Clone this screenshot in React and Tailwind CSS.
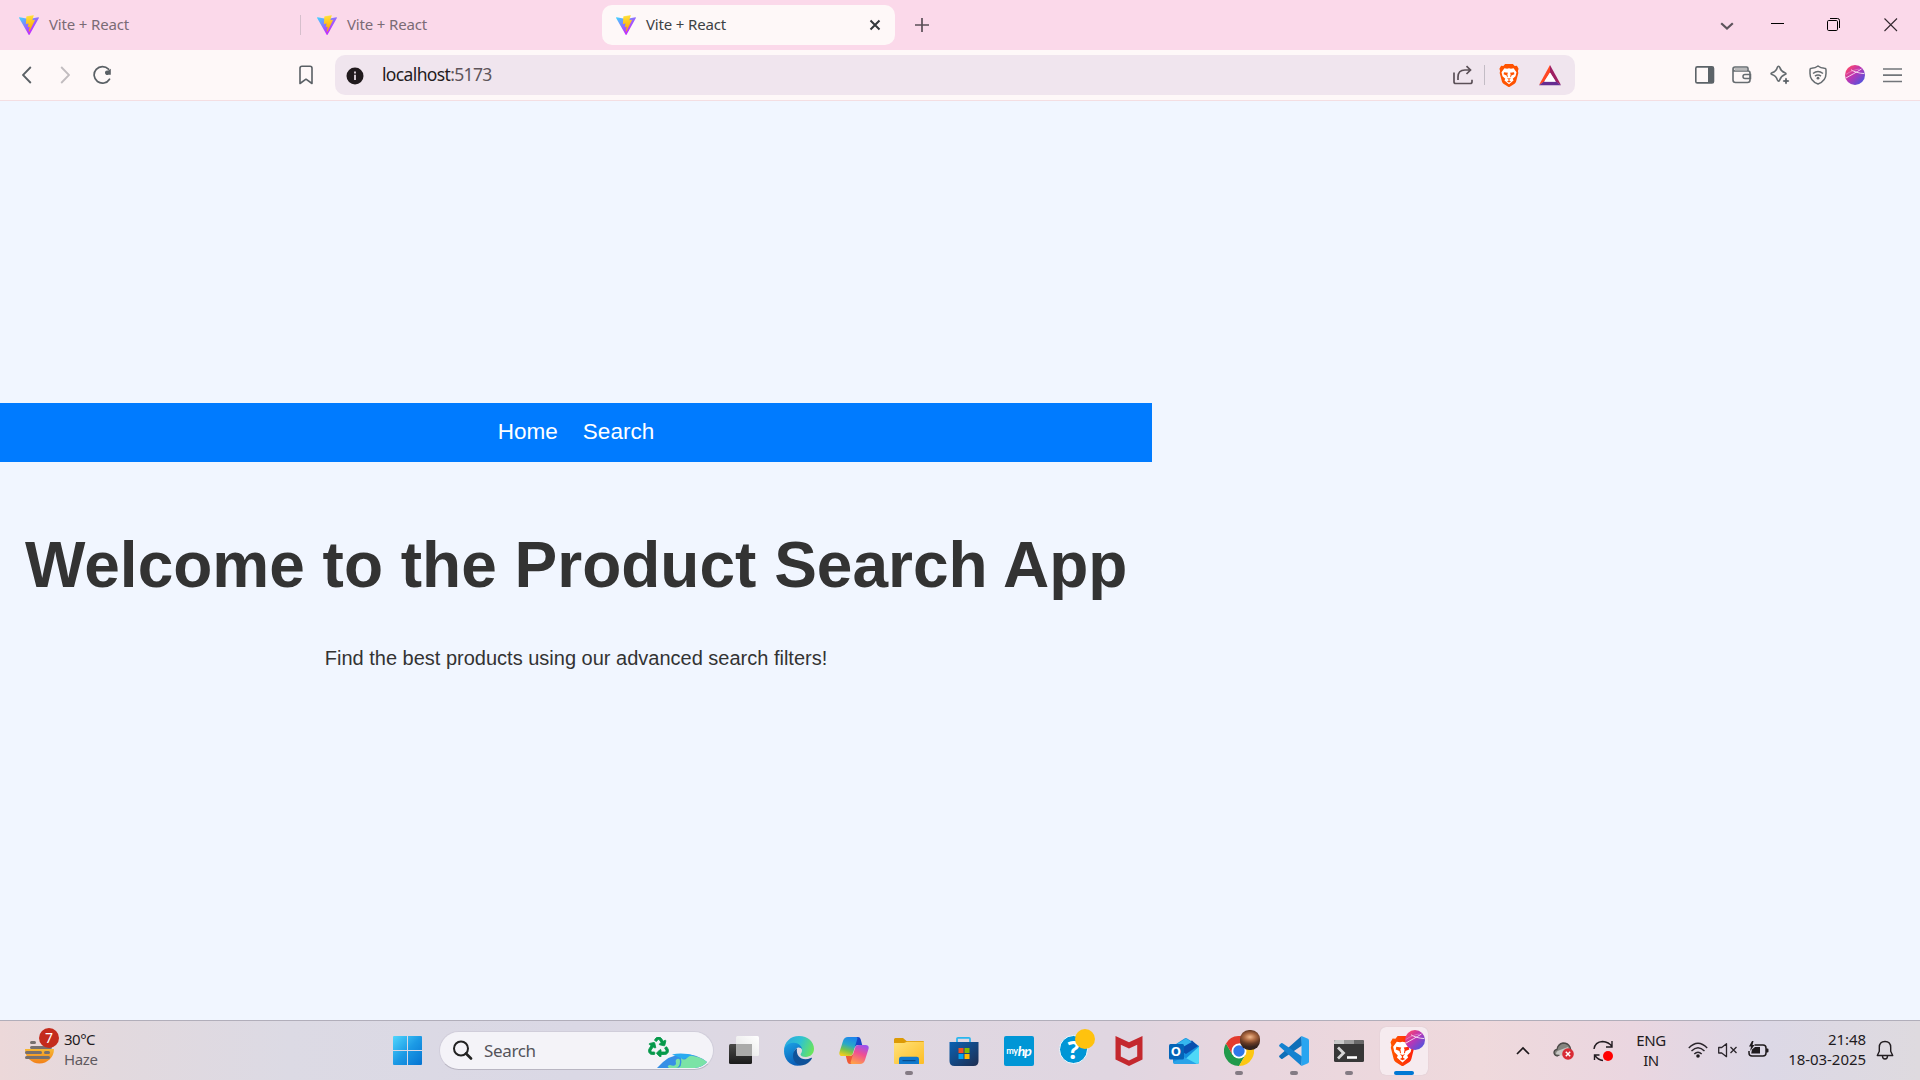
import React from "react";
import { FaRecycle } from "react-icons/fa";

const ui = "font-['Noto_Sans','Open_Sans',sans-serif]";

function ViteLogo({ id }) {
  return (
    <svg viewBox="0 0 256 257" className="h-5 w-5 shrink-0">
      <defs>
        <linearGradient id={id + "a"} x1="-.828%" x2="57.636%" y1="7.652%" y2="78.411%">
          <stop offset="0%" stopColor="#41D1FF" />
          <stop offset="100%" stopColor="#BD34FE" />
        </linearGradient>
        <linearGradient id={id + "b"} x1="43.376%" x2="50.316%" y1="2.242%" y2="89.03%">
          <stop offset="0%" stopColor="#FFEA83" />
          <stop offset="8.333%" stopColor="#FFDD35" />
          <stop offset="100%" stopColor="#FFA800" />
        </linearGradient>
      </defs>
      <path fill={`url(#${id}a)`} d="M255.153 37.938L134.897 252.976c-2.483 4.44-8.862 4.466-11.382.048L.875 37.958c-2.746-4.814 1.371-10.646 6.827-9.67l120.385 21.517a6.537 6.537 0 0 0 2.322-.004l117.867-21.483c5.438-.991 9.574 4.796 6.877 9.62Z" />
      <path fill={`url(#${id}b)`} d="M185.432.063L96.44 17.501a3.268 3.268 0 0 0-2.634 3.014l-5.474 92.456a3.268 3.268 0 0 0 3.997 3.378l24.777-5.718c2.318-.535 4.413 1.507 3.936 3.838l-7.361 36.047c-.495 2.426 1.782 4.5 4.151 3.78l15.304-4.649c2.372-.72 4.652 1.36 4.15 3.788l-11.698 56.621c-.732 3.542 3.979 5.473 5.943 2.437l1.313-2.028l72.516-144.72c1.215-2.423-.88-5.186-3.54-4.672l-25.505 4.922c-2.396.462-4.435-1.77-3.759-4.114l16.646-57.705c.677-2.35-1.37-4.583-3.769-4.113Z" />
    </svg>
  );
}

function Icon({ className = "", children, vb = "0 0 30 30", ...rest }) {
  return (
    <svg viewBox={vb} fill="none" className={"shrink-0 " + className} {...rest}>
      {children}
    </svg>
  );
}

function BraveLion({ className, id, from, to }) {
  return (
    <svg viewBox="0 0 24 24" preserveAspectRatio="none" className={"shrink-0 " + className}>
      <defs>
        <linearGradient id={id} x1="0" x2="1" y1="0" y2="0">
          <stop offset="0" stopColor={from} />
          <stop offset="1" stopColor={to} />
        </linearGradient>
      </defs>
      <path
        fill={`url(#${id})`}
        d="M7.300 0h9.400l2.100 2.200 2.700-.3L23.500 5l-.8 2.300.5 2-2.700 9q-.5 1.500-1.800 2.400l-5.700 3.100q-1 .5-2 0l-5.700-3.100Q4 19.800 3.500 18.300l-2.700-9 .5-2L.5 5l2-3.100 2.700.3z"
      />
      <path
        fill="#fff"
        d="M6.500 4.500l3.200.5 2.300-.5 2.300.5 3.200-.5L21 8.600l-1.200 4.200-3.300 2.700.9 1.700-5.400 4-5.400-4 .9-1.700-3.300-2.700L3 8.600z"
      />
      <path
        fill={`url(#${id})`}
        d="M6 8.600l4.800.6-.8 1.600.6 2.500-.9.600-.6-1.900-3.600-1.300zM18 8.600l-4.800.6.8 1.600-.6 2.500.9.600.6-1.900 3.600-1.300zM9.500 14.300l2.500.9 2.500-.9-1.900 1.900v1.200l1.900 1-2.500 1-2.500-1 1.900-1v-1.200z"
      />
    </svg>
  );
}

function Planet({ className, id }) {
  return (
    <Icon vb="0 0 20 20" className={className}>
      <defs>
        <linearGradient id={id} x1="0.1" y1="0.1" x2="0.9" y2="0.9">
          <stop offset="0" stopColor="#ff4668" />
          <stop offset="0.45" stopColor="#bb35b4" />
          <stop offset="1" stopColor="#4b55e0" />
        </linearGradient>
      </defs>
      <circle cx="10" cy="10" r="10" fill={`url(#${id})`} />
      <path d="M6 4.800c3 2 8 3.500 13.200 3.800M1 13C6 10 11 7.500 16.500 4" stroke="#fbe3f4" strokeWidth=".9" />
      <path d="M.8 9.500C5 6.500 10 4.500 14.500 4" stroke="#ef93cf" strokeWidth=".6" />
    </Icon>
  );
}

function Tab({ id, text, className, children }) {
  return (
    <div className={"flex h-10 items-center " + className}>
      <ViteLogo id={id} />
      <span className="mb-0.5 ml-2.5 text-[15px] leading-5 tracking-[-0.16px]">{text}</span>
      {children}
    </div>
  );
}

function TabStrip() {
  return (
    <div className="flex h-[50px] items-center bg-[#fbd9ea] text-[#7a6b75]">
      <Tab id="v1" text="Vite + React" className="ml-[19px] w-[281px]" />
      <div className="h-5 w-px bg-[#d6bfcc]" />
      <Tab id="v2" text="Vite + React" className="ml-4 w-[285px]" />
      <Tab id="v3" text="Vite + React" className="w-[293px] rounded-[10px] bg-[#fef8f8] pl-[14px] text-[#3d4144]">
        <Icon vb="0 0 12 12" className="mr-[14px] ml-auto h-3 w-3">
          <path d="M1.500 1.500l9 9M10.500 1.500l-9 9" stroke="#33383b" strokeWidth="2" />
        </Icon>
      </Tab>
      <Icon vb="0 0 14 14" className="ml-5 h-3.5 w-3.5">
        <path d="M7 0v14M0 7h14" stroke="#5a4e57" strokeWidth="1.700" />
      </Icon>
      <Icon vb="0 0 14 8" className="mt-px ml-auto h-2 w-3.5">
        <path d="M1.200 1.200L7 6.500l5.800-5.300" stroke="#5c535b" strokeWidth="2.200" />
      </Icon>
      <Icon vb="0 0 14 14" className="ml-[37px] h-3.5 w-3.5">
        <path d="M0 5.500h13" stroke="#000" strokeWidth="1" />
      </Icon>
      <Icon vb="0 0 14 14" className="ml-[42px] h-3.5 w-3.5">
        <rect x=".5" y="2.500" width="10" height="10" rx="1.200" stroke="#000" />
        <path d="M3 .5h7.500q2 0 2 2V10" stroke="#000" />
      </Icon>
      <Icon vb="0 0 14 14" className="mr-[22px] ml-[43px] h-3.5 w-3.5">
        <path d="M.5.5l12.500 12.500M13 .5L.5 13" stroke="#33272e" strokeWidth="1.100" />
      </Icon>
    </div>
  );
}

function Toolbar() {
  return (
    <div className="flex h-[51px] items-center border-b border-[#f4dee2] bg-[#fef8f8]">
      <Icon vb="0 0 10 18" className="ml-[22px] h-[18px] w-2.5">
        <path d="M8.800 1L1 9l7.800 8" stroke="#5a6065" strokeWidth="1.800" />
      </Icon>
      <Icon vb="0 0 10 18" className="ml-7 h-[18px] w-2.5">
        <path d="M1.200 1L9 9l-7.800 8" stroke="#c1bcbf" strokeWidth="1.800" />
      </Icon>
      <Icon vb="0 0 20 20" className="ml-[23px] h-5 w-5">
        <path d="M16.500 14.200A8.300 8.300 0 1 1 15.500 4.200" stroke="#5a6065" strokeWidth="1.700" strokeLinecap="round" />
        <path d="M17.800 3.800v6h-2.600a2.300 2.300 0 1 1 0-4.200z" fill="#5a6065" />
      </Icon>
      <Icon vb="0 0 14 20" className="ml-[186px] h-5 w-3.5">
        <path d="M1 3.200Q1 1.200 3 1.200h8q2 0 2 2v15.300l-6-4.300-6 4.300z" stroke="#5a6065" strokeWidth="1.600" strokeLinejoin="round" />
      </Icon>
      <div className="ml-[22px] flex h-10 w-[1240px] items-center rounded-[10px] bg-[#f0e5ee]">
        <Icon vb="0 0 18 18" className="mt-0.5 ml-[11px] h-[18px] w-[18px]">
          <circle cx="9" cy="9" r="8.500" fill="#211a1d" />
          <path d="M9 7.800v5.200M9 4.600v1.900" stroke="#f0e5ee" strokeWidth="1.700" />
        </Icon>
        <span className="mb-0.5 ml-[18px] text-[17.5px] leading-6 tracking-[-0.64px] text-[#241b20]">
          localhost<span className="text-[#5e545a]">:5173</span>
        </span>
        <Icon vb="0 0 20 20" className="ml-auto h-5 w-5">
          <path d="M1 7.500v9.200q0 1.800 1.800 1.800h14.400q1.800 0 1.800-1.800v-2" stroke="#5b5057" strokeWidth="1.700" />
          <path d="M5 15V12q0-7 7-7h5M13.500 1.200L17.500 5l-4 4" stroke="#5b5057" strokeWidth="1.700" />
        </Icon>
        <div className="ml-[11px] h-5 w-px bg-[#c3bcc5]" />
        <BraveLion id="br1" from="#ff5500" to="#ff5000" className="ml-[14px] h-[23px] w-5" />
        <Icon vb="0 0 24 21" className="mr-[13px] ml-[19px] h-[21px] w-6">
          <path d="M12 0L1 20l5-3 6-9.500z" fill="#ff4724" />
          <path d="M12 0l11 20-5-3-6-9.500z" fill="#9e1f63" />
          <path d="M1 20.200h22l-5-3.800H6z" fill="#662d91" />
          <path d="M12 7.500l5.800 9.300H6.200z" fill="#fff" />
        </Icon>
      </div>
      <Icon vb="0 0 20 18" className="ml-[120px] h-[18px] w-5">
        <rect x=".8" y=".9" width="17.700" height="16" rx="1.500" stroke="#5c6368" strokeWidth="1.600" />
        <path d="M13 1h5.500v16H13z" fill="#5c6368" />
      </Icon>
      <Icon vb="0 0 20 18" className="ml-[17px] h-[18px] w-5">
        <path d="M1 3v11q0 2.500 2.500 2.500h12q2.500 0 2.500-2.500V7q0-2-2-2H3Q1 5 1 3t2-2h11.500q1.500 0 1.500 1.500V5" stroke="#666c70" strokeWidth="1.600" />
        <path d="M2 2h13v2.500H3z" fill="#b9b9ba" />
        <path d="M18.500 8.500H13q-2 0-2 2t2 2h5.500z" stroke="#666c70" strokeWidth="1.500" />
      </Icon>
      <Icon vb="0 0 20 20" className="ml-[18px] h-5 w-5">
        <path d="M8.500 1.200q.9 0 1.200 1 1.300 4.200 5.200 5.600 2.200.8 0 1.700-3.900 1.400-5.200 5.500-1.200 2.200-2.300 0Q6.200 10.900 2 9.500q-2-.9 0-1.700 4.200-1.400 5.400-5.600.3-1 1.100-1z" stroke="#666c70" strokeWidth="1.600" />
        <path d="M16 12.500l1 2.500 2.500 1-2.500 1-1 2.500-1-2.500-2.500-1 2.500-1z" fill="#5c6368" />
        <path d="M16 13v6M13 16h6" stroke="#5c6368" />
      </Icon>
      <Icon vb="0 0 18 20" className="ml-[19px] h-5 w-[18px]">
        <path d="M9 1Q6.500 3 2.500 3.200 1 3.200 1 4.800V8.500q0 7.500 8 10.500 8-3 8-10.500V4.800q0-1.600-1.500-1.600Q11.500 3 9 1z" stroke="#666c70" strokeWidth="1.500" />
        <path d="M4 8.500q5-3.800 10 0M6 11.200q3-2.400 6 0" stroke="#666c70" strokeWidth="1.500" />
        <circle cx="9" cy="13.200" r="1.400" fill="#666c70" />
      </Icon>
      <Planet id="pl1" className="ml-[18px] h-5 w-5" />
      <Icon vb="0 0 20 16" className="ml-[18px] h-4 w-5">
        <path d="M0 2h19M0 8.200h19M0 14.500h19" stroke="#72757a" strokeWidth="1.700" />
      </Icon>
    </div>
  );
}

function Page() {
  return (
    <main className="flex h-[919px] flex-col bg-[#f1f6ff] pt-[302px] font-['Liberation_Sans',Arial,sans-serif] text-[#333]">
      <div className="w-[1152px]">
        <nav className="flex h-[59px] items-center justify-center gap-[25px] bg-[#007bff] pb-0.5 text-[22.5px] leading-[34px] text-white">
          <a>Home</a>
          <a>Search</a>
        </nav>
        <section className="px-[25px] pt-[68px] text-center">
          <h1 className="text-[64px] leading-[70px] font-bold whitespace-nowrap">Welcome to the Product Search App</h1>
          <p className="mt-[43px] text-[20px] leading-[30px]">Find the best products using our advanced search filters!</p>
        </section>
      </div>
    </main>
  );
}

function Slot({ children, running, active }) {
  return (
    <div className="flex h-[59px] w-[55px] shrink-0 items-center justify-center">
      <div
        className={
          "relative flex h-12 w-12 items-center justify-center rounded-md " +
          (active ? "bg-[#f6ebef] shadow-[0_0_1px_#c9b8c0]" : "")
        }
      >
        {children}
        {running && <span className="absolute bottom-0 left-5 h-1 w-2 rounded-full bg-[#847b84]" />}
        {active && <span className="absolute bottom-0 left-3.5 h-1 w-5 rounded-full bg-[#0078d4]" />}
      </div>
    </div>
  );
}

const big = "h-[30px] w-[30px]";

function Apps() {
  return (
    <>
      <Slot>
        <Icon className={big + " mb-px"}>
          <defs>
            <linearGradient id="tv" x1="0" y1="0" x2="0" y2="1"><stop stopColor="#4a4a48" /><stop offset="1" stopColor="#1b1b1b" /></linearGradient>
            <linearGradient id="tw" x1="1" y1="0" x2="0" y2="1"><stop stopColor="#fff" /><stop offset="1" stopColor="#e3e3e3" /></linearGradient>
          </defs>
          <rect x="0" y="9" width="23" height="20" rx="1.500" fill="url(#tv)" />
          <rect x="7" y="1" width="23" height="20" rx="1.500" fill="url(#tw)" />
          <path d="M7 9h16v12H8.500Q7 21 7 19.500z" fill="#aaaaa9" />
        </Icon>
      </Slot>
      <Slot>
        <Icon className={big}>
          <defs>
            <linearGradient id="e1" x1="0" y1=".3" x2="1" y2=".6"><stop stopColor="#2aa8e0" /><stop offset=".5" stopColor="#2fc3d0" /><stop offset="1" stopColor="#6be55a" /></linearGradient>
            <linearGradient id="e2" x1="0" y1="0" x2=".4" y2="1"><stop stopColor="#1ca4e6" /><stop offset="1" stopColor="#0a5fb8" /></linearGradient>
          </defs>
          <path d="M0 15C0 6 6.500 0 15 0c9 0 15 6 15 12.800 0 5-3.700 8.200-8.200 8.200-3.600 0-5.300-1.500-5.300-2.600 0-1 1.500-1.500 1.500-4 0-3-3-5.500-7.500-5.500C4.500 8.900 1 12 0 15z" fill="url(#e1)" />
          <path d="M0 15C.5 9.500 5 6.800 9.500 6.800c5 0 8.500 3.500 8.500 6.500-1-1.500-3-2.300-4.500-1.500-2.500 1-3.500 3.800-3.500 6.500 0 6 4.500 9.700 8.500 10.700C8 32 0 25 0 15z" fill="url(#e2)" />
          <path d="M13 12.200c-2.500 1.300-4 4.500-4 7.800C9 26 14 30 18.500 29.200c4-.7 7.500-3.300 9.300-6.500.4-.8-.3-1.200-1-.8C19 25.500 11.500 21 13 12.200z" fill="#0f5299" />
        </Icon>
      </Slot>
      <Slot>
        <Icon className={big}>
          <defs>
            <linearGradient id="c1" x1=".6" y1="0" x2=".3" y2="1"><stop stopColor="#1d86ec" /><stop offset=".4" stopColor="#28a8c8" /><stop offset=".7" stopColor="#77c34a" /><stop offset="1" stopColor="#f4cd1c" /></linearGradient>
            <linearGradient id="c2" x1=".7" y1="0" x2=".3" y2="1"><stop stopColor="#9d51ee" /><stop offset=".45" stopColor="#f04f93" /><stop offset="1" stopColor="#ff9f4a" /></linearGradient>
          </defs>
          <path d="M15 1h4q2 0 2.600 2l1.600 6h-4q-2.700 0-3.500 3z" fill="#1846c8" />
          <path d="M15 28h-4q-2 0-2.600-2l-1.600-6h4q2.700 0 3.500-3z" fill="#ef5a35" />
          <path d="M9 1h8q2 0 1.300 2L14 17q-1 3-4 3H3.500q-4 0-3-4L4 5Q5.200 1 9 1z" fill="url(#c1)" />
          <path d="M21 28h-8q-2 0-1.300-2L16 12q1-3 4-3h6.500q4 0 3 4L26 24q-1.200 4-5 4z" fill="url(#c2)" />
        </Icon>
      </Slot>
      <Slot running>
        <Icon className={big}>
          <defs><linearGradient id="f1" x1="0" y1="0" x2="1" y2="1"><stop stopColor="#ffe27a" /><stop offset="1" stopColor="#fdbd24" /></linearGradient></defs>
          <path d="M0 3.500Q0 2 1.500 2H9l3.500 3H29q1 0 1 1v6H0z" fill="#dc9a05" />
          <path d="M0 7h10l3-1.300h17V27q0 1-1 1H1q-1 0-1-1z" fill="url(#f1)" />
          <path d="M5 28v-5q0-2.200 2.200-2.200h15.600Q25 20.800 25 23v5z" fill="#0f78cc" />
          <path d="M8.500 24.600h13" stroke="#084c8c" strokeWidth="1.200" />
        </Icon>
      </Slot>
      <Slot>
        <Icon className={big}>
          <defs><linearGradient id="s1" x1="0" y1="0" x2="1" y2="1"><stop stopColor="#0a62b3" /><stop offset="1" stopColor="#1e2d50" /></linearGradient></defs>
          <path d="M8 7V2.800Q8 1.800 9 1.800h11q1 0 1 1V7" stroke="#29b6ee" strokeWidth="1.700" />
          <path d="M.5 6h29v19q0 5-5 5h-19q-5 0-5-5z" fill="url(#s1)" />
          <path d="M9.500 12h5v5h-5z" fill="#f25022" /><path d="M15.500 12h5v5h-5z" fill="#7fba00" />
          <path d="M9.500 18h5v5h-5z" fill="#00a4ef" /><path d="M15.500 18h5v5h-5z" fill="#ffb900" />
        </Icon>
      </Slot>
      <Slot>
        <div className="flex h-[30px] w-[30px] items-center justify-center rounded-[2px] bg-[#0096d6] font-['Lato',sans-serif] leading-none text-white">
          <span className="text-[9px] font-bold tracking-[-0.3px]">my</span>
          <span className="text-[14px] font-bold tracking-[-1px] italic">hp</span>
        </div>
      </Slot>
      <Slot>
        <div className="relative mb-0.5 flex h-[29px] w-[29px] items-center justify-center rounded-full border-[1.5px] border-white bg-[#0096d6] text-[25px] leading-none font-bold text-white">
          ?
          <span className="absolute -top-[7px] left-[15px] h-5 w-5 rounded-full bg-[#ffc20e]" />
        </div>
      </Slot>
      <Slot>
        <Icon className={big}>
          <path d="M1.500 0L15 6.300 28.500 0v23.500L15 30 1.500 23.500zM6.800 8.700v11.800L15 24.400l8.200-3.900V8.700L15 12.500z" fill="#c4282e" fillRule="evenodd" />
        </Icon>
      </Slot>
      <Slot>
        <div className="relative">
          <Icon className={big}>
            <path d="M4 10L15.500 2.500q1.300-.8 2.600 0L30 10v16q0 2-2 2H7q-3 0-3-3z" fill="#1490df" />
            <path d="M15 8l8-3.500 6 5.500-12 8-5-3z" fill="#0a4fae" />
            <path d="M8 8l8.800-5.500 6 3.500L12 12z" fill="#35b7ee" />
            <path d="M30 10.500V26q0 2-2 2H11z" fill="#4fd8f7" />
            <path d="M6 28q-2 0-2-2l11-5 13 7z" fill="#2aa3e8" />
            <rect x="0" y="8" width="15" height="15.500" rx="1.500" fill="#0364b8" />
          </Icon>
          <span className="absolute top-2 left-0 w-[15px] text-center text-[13px] leading-[15px] font-bold text-white">O</span>
        </div>
      </Slot>
      <Slot running>
        <div className="relative">
          <Icon className={big}>
            <path d="M2 7.500A15 15 0 0 0 15 30l6.500-11.300L8.500 18.700z" fill="#219a4b" />
            <path d="M28 7.500A15 15 0 0 1 15 30l6.500-11.300V7.500z" fill="#fcc712" />
            <path d="M15 7.500h13A15 15 0 0 0 2 7.500l6.500 11.300z" fill="#e33b2e" />
            <circle cx="15" cy="15" r="7.500" fill="#fff" />
            <circle cx="15" cy="15" r="5.700" fill="#2f77ea" />
          </Icon>
          <span className="absolute -top-1.5 left-4 h-5 w-5 rounded-[9px] bg-[radial-gradient(ellipse_80%_50%_at_50%_35%,#f2b98d_0%,#b06c44_35%,#6a3c26_65%,#35231f_100%)]" />
        </div>
      </Slot>
      <Slot running>
        <Icon className={big}>
          <path d="M22.500 0l.5 9.500L3.600 22.700q-.8.600-1.500 0L.5 21.200q-.8-.8 0-1.600z" fill="#0f6fb8" />
          <path d="M22.500 30l.5-9.500L3.600 7.300q-.8-.6-1.500 0L.5 8.800q-.8.800 0 1.600z" fill="#1482d0" />
          <path d="M22.500 0L29 2.800q1 .5 1 1.700v21q0 1.200-1 1.700L22.500 30z" fill="#29a5f0" />
        </Icon>
      </Slot>
      <Slot running>
        <Icon className={big}>
          <rect x="0" y="4" width="30" height="22" rx="1.500" fill="#373737" />
          <path d="M0 8V5.500Q0 4 1.500 4H10v4z" fill="#c9c9c9" /><path d="M10 4h10v4H10z" fill="#9b9b9b" /><path d="M20 4h8.500Q30 4 30 5.500V8H20z" fill="#686868" />
          <path d="M4 11.500l5.500 5.500L4 22.500" stroke="#d5d5d5" strokeWidth="2.800" />
          <path d="M13 21.500h10" stroke="#fff" strokeWidth="2.600" />
        </Icon>
      </Slot>
      <Slot active>
        <BraveLion id="br2" from="#ff5a00" to="#ff1f0a" className="mr-0.5 h-[30px] w-[25px]" />
        <Planet id="pl2" className="absolute top-[3px] left-[25px] h-5 w-5" />
      </Slot>
    </>
  );
}

function Taskbar() {
  return (
    <footer className="flex h-[60px] items-center border-t border-[#b1aeba] bg-[linear-gradient(90deg,#ecd8d9_0%,#e2d9de_6%,#dcdae4_15%,#dad8e5_30%,#dfd8e2_42%,#e0d6e1_58%,#e9d6de_66%,#efd9dc_77%,#ead6e0_85%,#dcd8e6_92%,#dedadf_100%)]">
      <div className="relative mb-0.5 ml-[25px] h-[30px] w-[30px]">
        <Icon className={big}>
          <defs><linearGradient id="w1" x1="0" y1="0" x2="0" y2="1"><stop stopColor="#f7b733" /><stop offset="1" stopColor="#f28019" /></linearGradient></defs>
          <path d="M0 14h29a14.500 14.500 0 0 1-29 0z" fill="url(#w1)" />
          <path d="M6.500 7.500h3M6.500 12.500h19M1.500 17.500h14M20.500 17.500h3M1.500 22.500h22" stroke="#77706f" strokeWidth="3" strokeLinecap="round" />
        </Icon>
        <span className="absolute -top-[7px] left-3.5 flex h-5 w-5 items-center justify-center rounded-full bg-[#c42b1c] text-[14px] leading-none text-white">7</span>
      </div>
      <div className="mb-1 ml-[9px] w-20 text-[15px] leading-5 tracking-[-0.5px] text-[#1f1b1e]">
        <div>30°C</div>
        <div className="tracking-[-0.4px] text-[#5f5a60]">Haze</div>
      </div>
      <Icon className="ml-[249px] h-[29px] w-[29px]" vb="0 0 29 29">
        <defs><linearGradient id="win" gradientUnits="userSpaceOnUse" x1="0" y1="0" x2="29" y2="29"><stop stopColor="#50d6fd" /><stop offset=".5" stopColor="#1c9ae5" /><stop offset="1" stopColor="#0573d1" /></linearGradient></defs>
        <path d="M1 0h13v14H0V1q0-1 1-1zM15 0h13q1 0 1 1v13H15zM0 15h14v14H1q-1 0-1-1zM15 15h14v13q0 1-1 1H15z" fill="url(#win)" />
      </Icon>
      <div className="ml-[17px] flex h-[39px] w-[275px] items-center rounded-full border border-[#d0cdda] border-b-[#b9b6c3] bg-[#f4f3f8]">
        <Icon vb="0 0 20 20" className="mb-px ml-[13px] h-5 w-5">
          <circle cx="8" cy="8.500" r="7" stroke="#222" strokeWidth="2" />
          <path d="M13 13.500l5 5" stroke="#222" strokeWidth="2.600" strokeLinecap="round" />
        </Icon>
        <span className="ml-[11px] text-[17px] leading-6 tracking-[-0.35px] text-[#55535a]">Search</span>
        <div className="mr-[6px] ml-auto flex h-full items-end">
          <FaRecycle className="mb-[12px] h-[20px] w-[21px] stroke-[#06994a] stroke-[22] text-[#06994a]" />
          <Icon vb="0 0 50 15" className="mb-px -ml-3 h-[15px] w-[50px]">
            <path d="M0 15Q12 1 27 1q13 0 23 8-4 5-12 6z" fill="#378fe6" />
            <path d="M15 1.500Q26-1 38 3l-12 3z" fill="#28aaf0" />
            <path d="M24 5q3 3 6 0t6-2q8 1 14 6-4 5-12 6H12q-3-2 1-3 6 2 6-2-1-3 1-4 3-1 3 2 0 6-4 7 7 0 5-10z" fill="#7be3a6" />
          </Icon>
        </div>
      </div>
      <div className="ml-0.5 flex">
        <Apps />
      </div>
      <Icon vb="0 0 14 10" className="ml-[85px] h-2.5 w-3.5">
        <path d="M1 8l6-6 6 6" stroke="#1d181b" strokeWidth="1.700" />
      </Icon>
      <Icon vb="0 0 22 20" className="mt-px ml-[23px] h-5 w-[22px]">
        <path d="M4 15Q1 14 1 11.500t3-3.200Q5 3 10 2q5 0 7 4 1 2 1 7H8z" fill="#85857f" stroke="#4c4a48" strokeWidth="1.300" />
        <path d="M3 13q0-3 4-4l8-3 2 6-6 3z" fill="#c9c8c5" />
        <circle cx="15" cy="13" r="5.800" fill="#d92b35" />
        <path d="M12.800 10.800l4.400 4.400M17.200 10.800l-4.400 4.400" stroke="#fff" strokeWidth="1.500" />
      </Icon>
      <Icon vb="0 0 22 22" className="ml-[18px] h-[22px] w-[22px]">
        <path d="M1 9Q2 2 9.500 1.500 16 2 19 6.500M19 1v6h-6M1.500 20v-5h5M2 15.500q3 4.500 8 5" stroke="#211b20" strokeWidth="1.400" />
        <circle cx="15" cy="16" r="5" fill="#f00" />
      </Icon>
      <div className="mb-0.5 ml-3.5 w-[44px] text-center text-[15px] leading-5 tracking-[-0.4px] text-[#1f1b1e]">
        <div>ENG</div>
        <div>IN</div>
      </div>
      <Icon vb="0 0 20 16" className="mb-0.5 ml-[15px] h-4 w-5">
        <path d="M.8 6q9.200-9.500 18.400 0M3.500 9q6.500-6.500 13 0M6.300 12q3.700-3.600 7.400 0" stroke="#2a252b" strokeWidth="1.400" />
        <circle cx="10" cy="14" r="1.800" fill="#1f1b1e" />
      </Icon>
      <Icon vb="0 0 20 16" className="mb-0.5 ml-2.5 h-4 w-5">
        <path d="M.7 5.500h3L8.500 1.700v13L3.700 11h-3z" stroke="#2a252b" strokeWidth="1.300" strokeLinejoin="round" />
        <path d="M12.500 5l6 6M18.500 5l-6 6" stroke="#2a252b" strokeWidth="1.300" />
      </Icon>
      <Icon vb="0 0 22 18" className="mb-0.5 ml-2.5 h-[18px] w-[22px]">
        <path d="M6.500 4H15q3 0 3 3v5q0 3-3 3H4q-3 0-3-3v-2" stroke="#1f1b1e" strokeWidth="1.500" />
        <path d="M4 8.500L7 6h5v6.500H3.200z" fill="#1f1b1e" />
        <path d="M18 7.500h1.500q1 0 1 1v2q0 1-1 1H18zM4 0L1 5.500h2L2.200 10 6.500 4h-2L5.500 0z" fill="#1f1b1e" />
      </Icon>
      <div className="mb-1 ml-auto text-right text-[15px] leading-5 tracking-[-0.05px] text-[#1f1b1e]">
        <div>21:48</div>
        <div>18-03-2025</div>
      </div>
      <Icon vb="0 0 18 20" className="mr-[26px] mb-px ml-2.5 h-5 w-[18px]">
        <path d="M9 1.500q5.700 0 5.700 6v3.800l2 4.200H1.300l2-4.200V7.500q0-6 5.700-6z" stroke="#211c20" strokeWidth="1.400" strokeLinejoin="round" />
        <path d="M6.500 16q0 3 2.500 3t2.500-3" stroke="#211c20" strokeWidth="1.400" />
      </Icon>
    </footer>
  );
}

export default function App() {
  return (
    <div className={"flex h-[1080px] w-[1920px] flex-col overflow-hidden " + ui}>
      <TabStrip />
      <Toolbar />
      <Page />
      <Taskbar />
    </div>
  );
}
